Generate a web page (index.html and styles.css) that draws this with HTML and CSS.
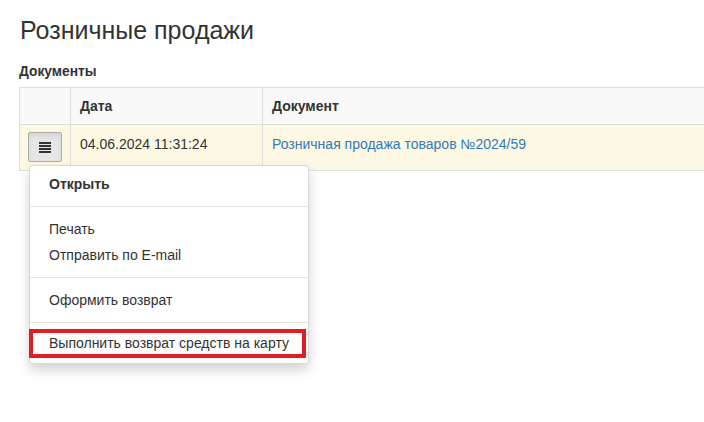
FILE: index.html
```html
<!DOCTYPE html>
<html lang="ru">
<head>
<meta charset="utf-8">
<link rel="stylesheet" href="styles.css">
</head>
<body>
<div class="page">
  <h1 class="title">Розничные продажи</h1>
  <div class="section-label">Документы</div>
  <div class="table-wrap">
    <table class="docs">
      <thead>
        <tr>
          <th class="col-btn"></th>
          <th class="col-date">Дата</th>
          <th class="col-doc">Документ</th>
        </tr>
      </thead>
      <tbody>
        <tr class="warning">
          <td class="col-btn">
            <button class="menu-btn" type="button" aria-label="menu">
              <svg width="12" height="11" viewBox="0 0 12 11"><rect x="0" y="0" width="12" height="2" fill="#333"/><rect x="0" y="3" width="12" height="2" fill="#333"/><rect x="0" y="6" width="12" height="2" fill="#333"/><rect x="0" y="9" width="12" height="2" fill="#333"/></svg>
            </button>
          </td>
          <td class="col-date">04.06.2024 11:31:24</td>
          <td class="col-doc"><a href="#" class="doc-link">Розничная продажа товаров №2024/59</a></td>
        </tr>
      </tbody>
    </table>
    <ul class="dropdown">
      <li class="item bold">Открыть</li>
      <li class="divider"></li>
      <li class="item">Печать</li>
      <li class="item">Отправить по E-mail</li>
      <li class="divider"></li>
      <li class="item">Оформить возврат</li>
      <li class="divider"></li>
      <li class="item highlighted">Выполнить возврат средств на карту</li>
    </ul>
  </div>
</div>
</body>
</html>
```
FILE: styles.css
```css
html, body {
  margin: 0;
  padding: 0;
  background: #fff;
}
body {
  font-family: "Liberation Sans", Arial, sans-serif;
  color: #333;
  font-size: 14px;
  line-height: 20px;
}
.page {
  padding: 0 0 0 19px;
  overflow: hidden;
  height: 422px;
}
.title {
  margin: 15px 0 0 1px;
  font-size: 25px;
  font-weight: normal;
  line-height: 30px;
  color: #333;
}
.section-label {
  margin: 19px 0 0 0;
  font-size: 13.8px;
  font-weight: bold;
  line-height: 16px;
}
.table-wrap {
  position: relative;
  margin-top: 7px;
}
.docs {
  border-collapse: collapse;
  width: 720px;
}
.docs th, .docs td {
  border: 1px solid #ddd;
  padding: 0 9px;
  text-align: left;
}
.docs th {
  background: #f9f9f9;
  height: 36px;
  font-size: 14px;
  font-weight: bold;
  vertical-align: middle;
}
.docs td {
  height: 36px;
  padding-top: 9px;
  font-size: 14px;
  vertical-align: top;
}
.docs tr.warning td {
  background: #fcf8e3;
}
.docs .col-btn {
  width: 42px;
  padding-left: 8px;
  padding-right: 0;
}
.docs td.col-btn {
  padding-top: 7px;
}
.docs .col-date { width: 173px; }
.menu-btn {
  display: flex;
  align-items: center;
  justify-content: center;
  width: 34px;
  height: 30px;
  background: #e6e6e6;
  border: 1px solid #adadad;
  border-radius: 2px;
  padding: 0;
  box-shadow: inset 0 3px 5px rgba(0,0,0,0.08);
}
.doc-link {
  color: #337ab7;
  text-decoration: none;
}
.dropdown {
  position: absolute;
  left: 10px;
  top: 78px;
  width: 278px;
  margin: 0;
  padding: 5px 0;
  list-style: none;
  background: #fff;
  border: 1px solid rgba(0,0,0,0.15);
  border-radius: 4px;
  box-shadow: 0 6px 12px rgba(0,0,0,0.175);
  font-size: 14px;
}
.item {
  padding: 3px 19px;
  line-height: 20px;
  color: #333;
  white-space: nowrap;
}
.item.bold { font-weight: bold; }
.divider {
  height: 1px;
  margin: 9px 0;
  background: #e5e5e5;
}
.item.highlighted {
  outline: 4px solid #e31b23;
  outline-offset: -4px;
  margin: -3px 2px 0 -1px;
  padding: 4px 16px 5px 20px;
}
```
